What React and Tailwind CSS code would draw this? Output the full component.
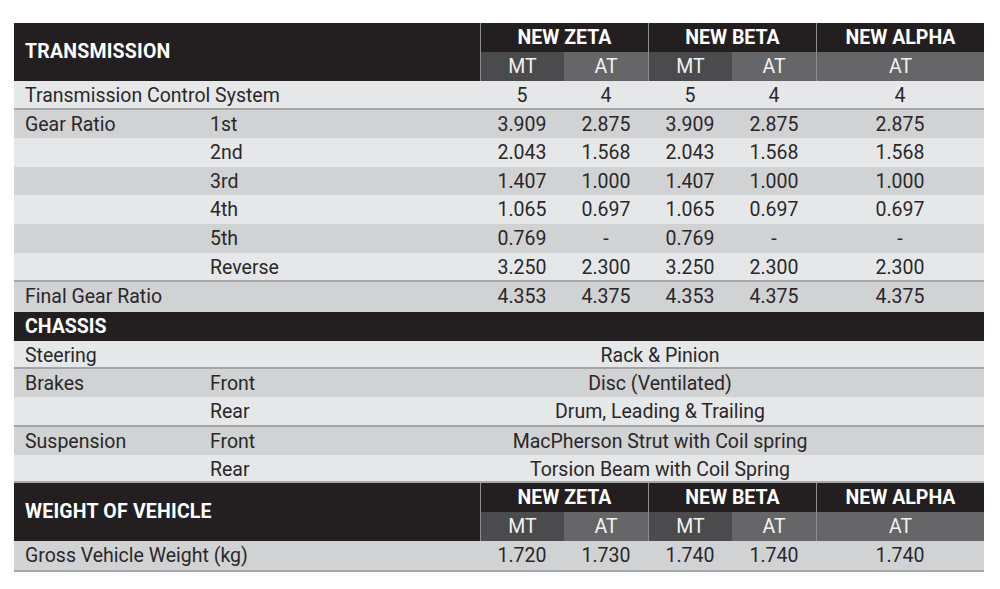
import React from "react";

const F = "font-['Roboto','Liberation_Sans',sans-serif]";
const LIGHT = "bg-[#e6e7e8]";
const DARK = "bg-[#d1d2d4]";
const LINE = "border-b-2 border-[#a5a6a8]";

function Header({ title }) {
  return (
    <div className="grid h-[58px] grid-cols-[466px_84px_84px_84px_84px_168px] grid-rows-[29px_29px] bg-[#231f20] text-white">
      <div className="row-span-2 flex items-center whitespace-nowrap pl-[11px] text-[19.5px] font-bold tracking-[0.2px]">{title}</div>
      <div className="col-span-2 flex items-center justify-center border-l border-[#8e8e90] text-[19.5px] font-bold">NEW ZETA</div>
      <div className="col-span-2 flex items-center justify-center border-l border-[#8e8e90] text-[19.5px] font-bold">NEW BETA</div>
      <div className="flex items-center justify-center border-l border-[#8e8e90] text-[19.5px] font-bold">NEW ALPHA</div>
      <div className="flex items-center justify-center border-l border-[#8e8e90] bg-[#4b4a4c] text-[19.5px] text-[#f2f2f2]">MT</div>
      <div className="flex items-center justify-center bg-[#666567] text-[19.5px] text-[#f2f2f2]">AT</div>
      <div className="flex items-center justify-center border-l border-[#8e8e90] bg-[#4b4a4c] text-[19.5px] text-[#f2f2f2]">MT</div>
      <div className="flex items-center justify-center bg-[#666567] text-[19.5px] text-[#f2f2f2]">AT</div>
      <div className="flex items-center justify-center border-l border-[#8e8e90] bg-[#666567] text-[19.5px] text-[#f2f2f2]">AT</div>
    </div>
  );
}

function DataRow({ a, b, vals, cls }) {
  return (
    <div className={`grid grid-cols-[196px_270px_84px_84px_84px_84px_168px] items-center text-[19.5px] text-[#2b2728] ${cls}`}>
      <div className="whitespace-nowrap pl-[11px]">{a}</div>
      <div className="whitespace-nowrap">{b}</div>
      {vals.map((v, i) => (
        <div key={i} className="whitespace-nowrap text-center">{v}</div>
      ))}
    </div>
  );
}

function SpanRow({ a, b, value, cls }) {
  return (
    <div className={`grid grid-cols-[196px_270px_504px] items-center text-[19.5px] text-[#2b2728] ${cls}`}>
      <div className="whitespace-nowrap pl-[11px]">{a}</div>
      <div className="whitespace-nowrap">{b}</div>
      <div className="whitespace-nowrap pr-[144px] text-center">{value}</div>
    </div>
  );
}

export default function App() {
  return (
    <div className={`min-h-[589px] w-[1000px] bg-white pt-[23px] ${F}`}>
      <div className="ml-[14px] w-[970px]">
        <Header title="TRANSMISSION" />
        <DataRow a="Transmission Control System" b="" vals={["5", "4", "5", "4", "4"]} cls={`h-[29px] ${LIGHT} ${LINE}`} />
        <DataRow a="Gear Ratio" b="1st" vals={["3.909", "2.875", "3.909", "2.875", "2.875"]} cls={`h-[28px] ${DARK}`} />
        <DataRow a="" b="2nd" vals={["2.043", "1.568", "2.043", "1.568", "1.568"]} cls={`h-[29px] ${LIGHT}`} />
        <DataRow a="" b="3rd" vals={["1.407", "1.000", "1.407", "1.000", "1.000"]} cls={`h-[28px] ${DARK}`} />
        <DataRow a="" b="4th" vals={["1.065", "0.697", "1.065", "0.697", "0.697"]} cls={`h-[29px] ${LIGHT}`} />
        <DataRow a="" b="5th" vals={["0.769", "-", "0.769", "-", "-"]} cls={`h-[29px] ${DARK}`} />
        <DataRow a="" b="Reverse" vals={["3.250", "2.300", "3.250", "2.300", "2.300"]} cls={`h-[29px] ${LIGHT} ${LINE}`} />
        <DataRow a="Final Gear Ratio" b="" vals={["4.353", "4.375", "4.353", "4.375", "4.375"]} cls={`h-[30px] ${DARK}`} />

        <div className="flex h-[29px] items-center bg-[#231f20] pl-[11px] text-[19.5px] font-bold text-white">CHASSIS</div>
        <SpanRow a="Steering" b="" value="Rack & Pinion" cls={`h-[28px] ${LIGHT} ${LINE}`} />
        <SpanRow a="Brakes" b="Front" value="Disc (Ventilated)" cls={`h-[28px] ${DARK}`} />
        <SpanRow a="" b="Rear" value="Drum, Leading & Trailing" cls={`h-[30px] ${LIGHT} ${LINE}`} />
        <SpanRow a="Suspension" b="Front" value="MacPherson Strut with Coil spring" cls={`h-[28px] ${DARK}`} />
        <SpanRow a="" b="Rear" value="Torsion Beam with Coil Spring" cls={`h-[28px] ${LIGHT} ${LINE}`} />

        <Header title="WEIGHT OF VEHICLE" />
        <DataRow a="Gross Vehicle Weight (kg)" b="" vals={["1.720", "1.730", "1.740", "1.740", "1.740"]} cls={`h-[31px] ${DARK} ${LINE}`} />
      </div>
    </div>
  );
}
